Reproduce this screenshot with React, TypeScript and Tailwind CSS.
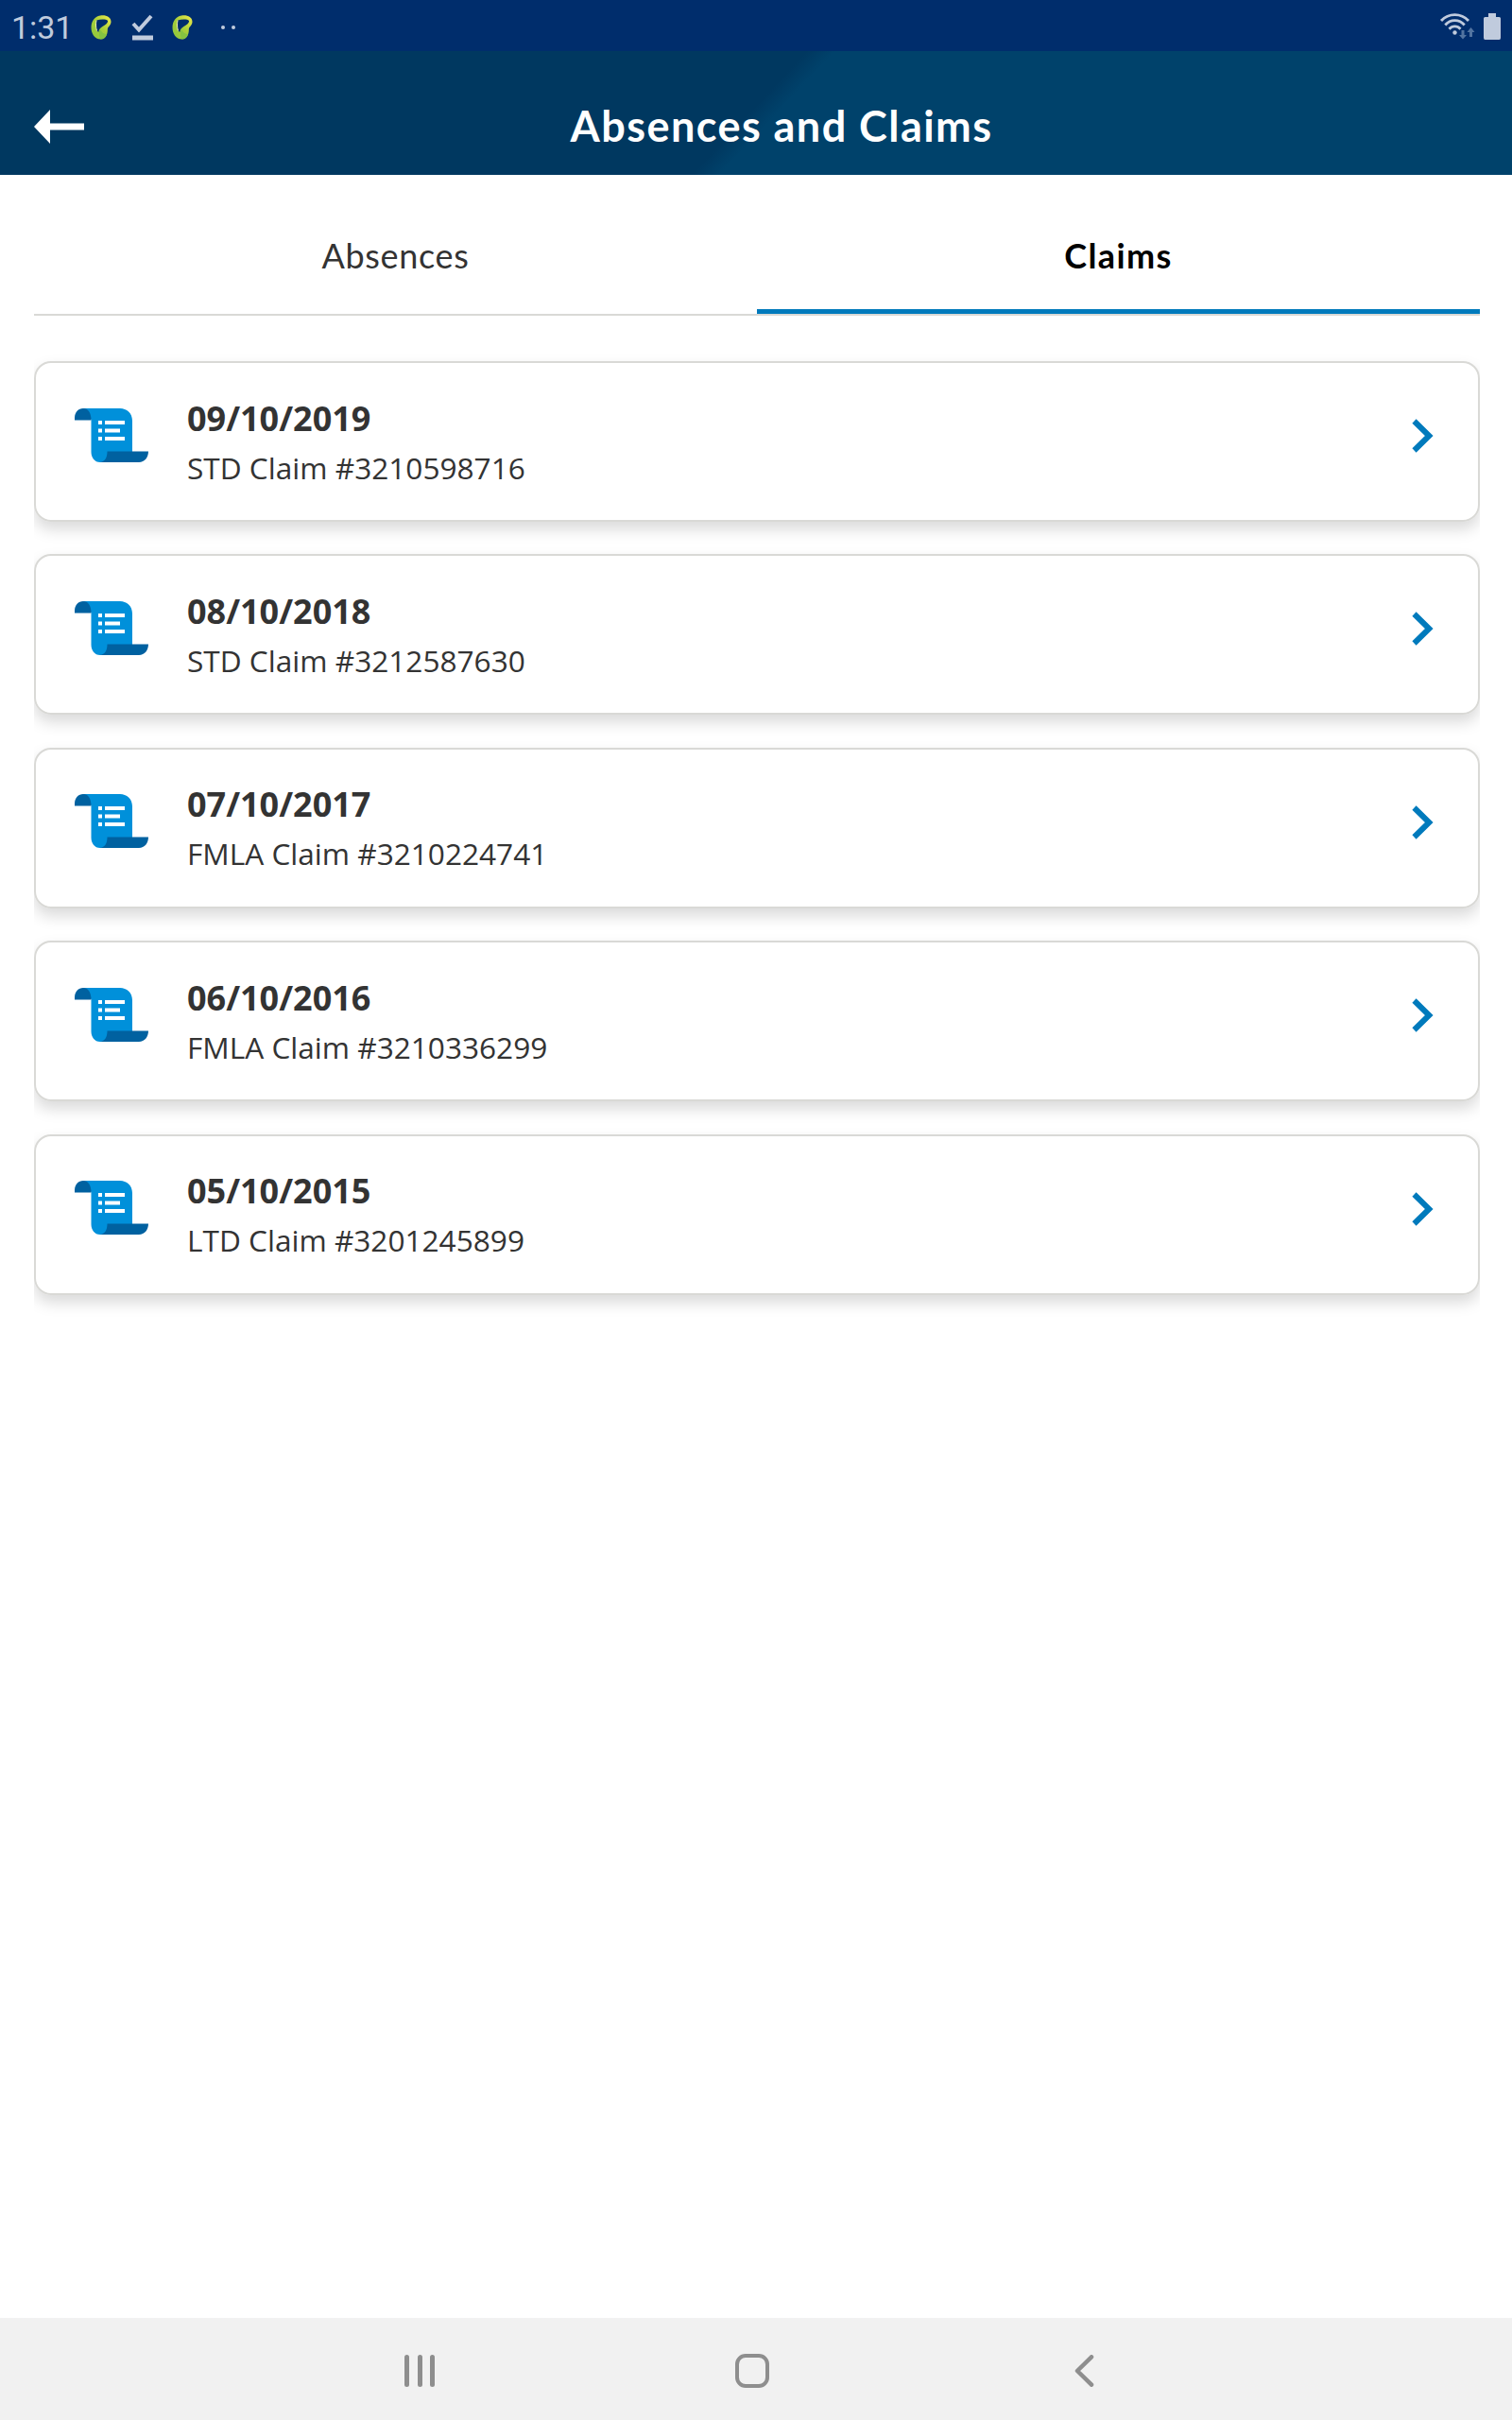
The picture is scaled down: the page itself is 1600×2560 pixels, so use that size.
import React from "react";

const claims = [
  { date: "09/10/2019", label: "STD Claim #3210598716" },
  { date: "08/10/2018", label: "STD Claim #3212587630" },
  { date: "07/10/2017", label: "FMLA Claim #3210224741" },
  { date: "06/10/2016", label: "FMLA Claim #3210336299" },
  { date: "05/10/2015", label: "LTD Claim #3201245899" },
];

function RibbonIcon() {
  return (
    <svg width="22" height="26" viewBox="0 0 22 26" className="shrink-0">
      <defs>
        <linearGradient id="ribbon" x1="0" y1="1" x2="1" y2="0">
          <stop offset="0" stopColor="#8cc63f" />
          <stop offset="0.5" stopColor="#a6ce39" />
          <stop offset="1" stopColor="#f4ec4a" />
        </linearGradient>
      </defs>
      <path
        fill="url(#ribbon)"
        fillRule="evenodd"
        d="M10 .5C16 -.5 21.500 2 21.500 7C21.500 11 18 12 17.800 15C18 20 16 25.500 10.500 25.500C4 25.500 .5 19.500 .5 13C.5 6.500 4 1.500 10 .5ZM6 5.500C5.200 9 5.300 13 6.500 16.500L8.300 18C8.600 15 10 13.500 12.500 12C15.500 10.300 18.500 8.500 18 6C16.500 4.300 11 4.200 6 5.500Z"
      />
      <path d="M6 5.500C5.200 9 5.300 13 6.500 16.500" fill="none" stroke="#eef3b0" strokeWidth="1" />
      <path d="M10 15C11 18 14 20 17 20C16 23.500 13.500 25.500 10.500 25.500C8.500 23 8.500 18 10 15Z" fill="#84c341" />
    </svg>
  );
}

function ClaimIcon() {
  return (
    <svg width="78" height="57" viewBox="0 0 78 57" className="shrink-0">
      <path d="M9 0H48C55 0 61 5 61 13V50L34 57H27C21 57 17.500 52 17.500 46V12Z" fill="#0090da" />
      <path d="M0 12.500V10C0 4 4 0 9 0C14 0 17.500 4.500 17.500 12.500Z" fill="#0061a0" />
      <path d="M34.500 45.500H78C78 52 74 57 68 57H26C32 57 34.500 52 34.500 45.500Z" fill="#0061a0" />
      <g fill="#fff">
        <path d="M25 13h4v4h-4zM25 21.500h4v4h-4zM25 30h4v4h-4zM32 13h21v4H32zM32 21.500h16v4H32zM32 30h21v4H32z" />
      </g>
    </svg>
  );
}

function StatusBar() {
  return (
    <div className="flex h-[54px] items-center justify-between bg-[#002d6c] text-[#c0cbdd]">
      <div className="flex items-center pl-3 pt-[3px]">
        <span className="w-[84px] font-['Roboto',sans-serif] text-[34px] leading-none tracking-[-0.1px]">1:31</span>
        <RibbonIcon />
        <svg width="24" height="28" viewBox="0 0 24 28" className="ml-[21px]" fill="none" stroke="currentColor">
          <path d="M2 10L8 16.500L21 2" strokeWidth="4" />
          <path d="M1 25H23" strokeWidth="5" />
        </svg>
        <div className="ml-[19px]">
          <RibbonIcon />
        </div>
        <div className="ml-[30px] flex gap-[7px]">
          <span className="size-1 rounded-full bg-current" />
          <span className="size-1 rounded-full bg-current" />
        </div>
      </div>
      <svg width="64" height="28" viewBox="0 0 64 28" className="mr-3 mt-0.5">
        <g fill="none" stroke="#c0cbdd" strokeWidth="2.800">
          <path d="M1 8C9 -.5 22 -.5 30 8" />
          <path d="M5.300 12.500C11 6 20 6 25.700 12.500" />
          <path d="M9.500 16.800C13 13 18 13 21.500 16.800" />
        </g>
        <circle cx="15.500" cy="20.500" r="2.200" fill="#c0cbdd" />
        <g fill="#5274a0">
          <path d="M22.500 18h3v5h2.500l-4 4.500l-4 -4.500h2.500z" />
          <path d="M31 25h3v-5h2.500l-4 -5l-4 5H31z" />
        </g>
        <path d="M51 0h8v4h3.500q1.500 0 1.500 1.500V26q0 2 -1.500 2H47.500q-1.500 0 -1.500 -2V5.500q0 -1.500 1.500 -1.500H51z" fill="#c0cbdd" />
      </svg>
    </div>
  );
}

function Header() {
  return (
    <header className="grid h-[131px] grid-cols-[1fr_auto_1fr] items-center bg-[linear-gradient(133deg,#003860_49.6%,#00426b_51.3%)] pt-7">
      <svg width="53" height="36" viewBox="0 0 53 36" className="ml-9 mt-px" fill="#fff">
        <path d="M0 18L17 0V14.500H53V21.500H17V36Z" />
      </svg>
      <h1 className="ml-[54px] font-['Lato',sans-serif] text-[45px] font-bold leading-none tracking-[1.45px] text-white">
        Absences and Claims
      </h1>
    </header>
  );
}

export default function App() {
  return (
    <div className="flex h-[2560px] w-[1600px] flex-col bg-white">
      <StatusBar />
      <Header />
      <main className="flex-1 pl-9 pr-[34px]">
        <div className="grid h-[149px] grid-cols-2 border-b-2 border-[#d9d9d6] text-center font-['Lato',sans-serif] text-[36px]">
          <div className="pt-[58px] leading-[54px] tracking-[0.65px] text-[#333]">Absences</div>
          <div className="border-b-[5px] border-[#007abc] pt-[58px] font-bold leading-[54px] tracking-[1.4px] text-black">
            Claims
          </div>
        </div>
        <ul className="mt-9 flex flex-col gap-[34.4px] overflow-x-clip pt-3 font-['Open_Sans',sans-serif] text-[#333]">
          {claims.map((claim) => (
            <li
              key={claim.label}
              className="flex h-[170px] items-center rounded-[18px] border-2 border-[#d9d9d6] pl-[41px] pr-[47px] shadow-[0_8px_16px_rgba(0,0,0,0.15)]"
            >
              <div className="-mt-3.5">
                <ClaimIcon />
              </div>
              <div className="ml-[41px] flex-1 pt-[3px]">
                <div className="text-[36px] font-bold leading-[52px]">{claim.date}</div>
                <div className="text-[31.6px] leading-[52px]">{claim.label}</div>
              </div>
              <svg width="23" height="36" viewBox="0 0 23 36" className="-mt-3" fill="none" stroke="#007abc" strokeWidth="6">
                <path d="M2.500 2.500L18.300 18L2.500 33.500" />
              </svg>
            </li>
          ))}
        </ul>
      </main>
      <nav className="flex h-[108px] items-center bg-[#f1f1f1] pl-[428px] pt-[3px] text-[#8e8e8e]">
        <div className="flex gap-[8.500px]">
          <span className="h-[34px] w-[5px] rounded-full bg-current" />
          <span className="h-[34px] w-[5px] rounded-full bg-current" />
          <span className="h-[34px] w-[5px] rounded-full bg-current" />
        </div>
        <span className="ml-[318px] size-9 rounded-[11px] border-4 border-current" />
        <svg width="21" height="34" viewBox="0 0 21 34" className="ml-[323px]" fill="none" stroke="currentColor" strokeWidth="4.500" strokeLinecap="round" strokeLinejoin="round">
          <path d="M18 2.300L3 17L18 31.700" />
        </svg>
      </nav>
    </div>
  );
}
